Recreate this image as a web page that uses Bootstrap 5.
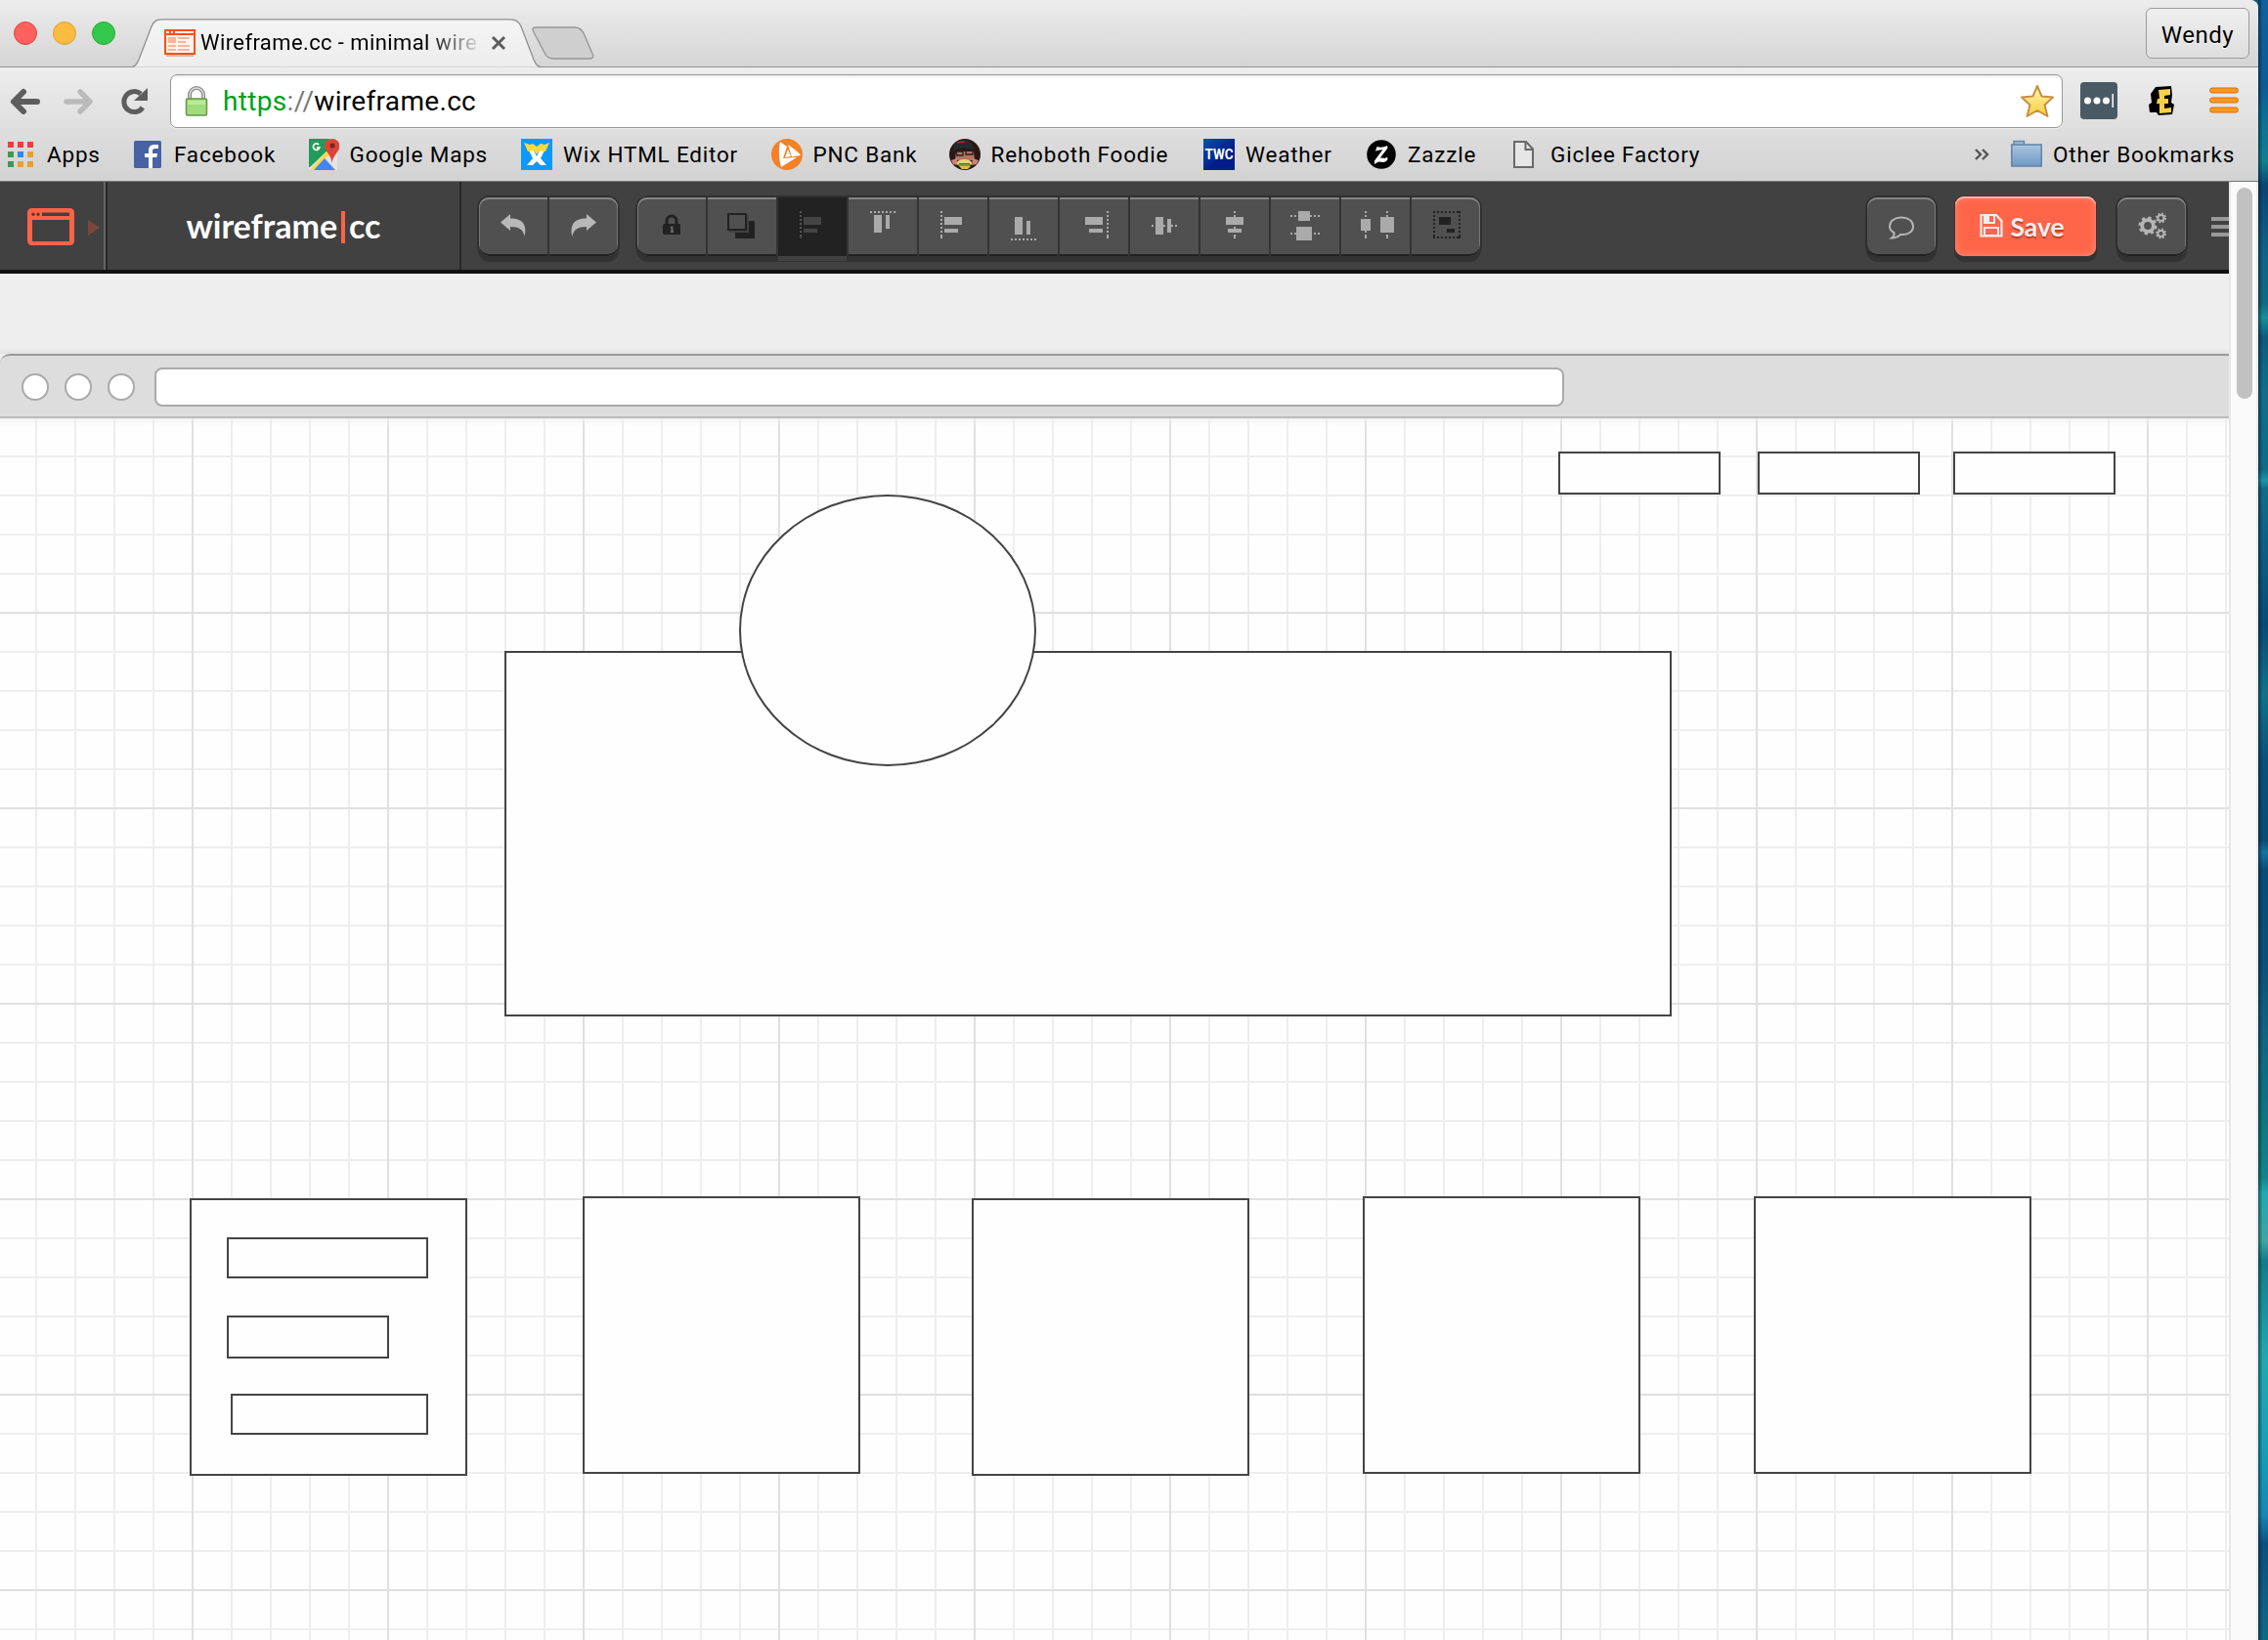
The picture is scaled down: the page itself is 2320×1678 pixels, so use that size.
<!DOCTYPE html>
<html lang="en">
<head>
<meta charset="utf-8">
<meta name="viewport" content="width=device-width, initial-scale=1">
<title>Wireframe.cc - minimal wireframing tool</title>
<link href="https://cdn.jsdelivr.net/npm/bootstrap@5.3.0/dist/css/bootstrap.min.css" rel="stylesheet">
<style>
  html, body { height: 100%; overflow: hidden; }
  body { font-family: Roboto, "Liberation Sans", sans-serif; color: #000; background: #0e5a70; line-height: 1; }
  svg { display: block; flex: none; }
  .desk { width: 2320px; height: 1678px; }
  .win { width: 2310px; background: #d9d9d9; border-top-right-radius: 8px; }
  .wallpaper { width: 10px; background: linear-gradient(90deg, rgba(0,20,30,.55), rgba(0,20,30,0) 45%),
    linear-gradient(#0f609c 0, #0c5c94 90px, #0d6f94 120px, #12808f 165px, #0a4470 190px, #0c4f7c 215px, #0f6485 260px, #0f6a80 310px, #169099 325px, #0d5a7c 345px, #0f6f8b 400px, #106a85 480px, #1a97a6 492px, #0f6d88 500px, #0c5a7f 580px, #0a4a73 640px, #117289 710px, #0a5077 780px, #0a4b74 860px, #1673a0 872px, #0a4c78 890px, #0b4e76 980px, #0f6580 1060px, #10777f 1150px, #12858a 1205px, #23a8ae 1220px, #3fa5a5 1270px, #127c88 1290px, #1b929b 1340px, #22a9ae 1390px, #16a0b6 1480px, #1787b5 1550px, #0c4f80 1580px, #0f6a83 1678px); }
  .strip { height: 69px; background: linear-gradient(#ececec, #d5d5d5); border-bottom: 1px solid #929292; }
  .lights { padding: 22px 0 0 14px; }
  .light { width: 24px; height: 24px; border-radius: 50%; margin-right: 16px; border: 1px solid; }
  .light-r { background: #fc615d; border-color: #e04744; }
  .light-y { background: #fdbc40; border-color: #e0a033; }
  .light-g { background: #34c84a; border-color: #27aa35; }
  .tab { width: 418px; height: 50px; margin: 19px 0 0 12px; }
  .tab-in { padding: 11px 0 0 38px; }
  .tab-title { width: 302px; font-size: 22px; letter-spacing: .4px; line-height: 27px; margin: 0 0 0 5px; white-space: nowrap;
    -webkit-mask-image: linear-gradient(90deg, #000 232px, transparent 290px); mask-image: linear-gradient(90deg, #000 232px, transparent 290px); }
  .tab-x { margin: 6px 0 0 -5px; }
  .newtab { margin: 27px 0 0 -4px; }
  .user { width: 106px; height: 52px; margin: 8px 9px 0 auto; padding-top: 3px; border: 1px solid #9b9b9b; border-radius: 6px; background: linear-gradient(#efefef, #dedede); font-size: 24px; letter-spacing: .5px; text-shadow: 0 1px #fff; }
  .chrome { height: 117px; background: linear-gradient(#ededed, #d2d2d2); border-bottom: 1px solid #727674; }
  .omni { width: 1936px; height: 55px; margin-top: 7px; border: 1.5px solid #979797; border-radius: 7px; background: #fff; box-shadow: inset 0 2px 1px #eee, 0 1px #efefef; }
  .url { font-size: 28px; margin-left: 15px; padding-top: 1px; letter-spacing: .32px; }
  .marks { height: 54px; font-size: 22.500px; letter-spacing: .8px; padding-left: 5px; }
  .mk { gap: 11px; white-space: nowrap; flex: none; padding-top: 1px; }
  .mk svg { width: 32px; height: 32px; margin-top: -1px; }
  .appbar { height: 94px; background: #414141; border-bottom: 4px solid #111; }
  .brandcell { width: 364px; height: 90px; border-left: 2px solid #272727; border-right: 2px solid #272727; font: 700 34px/1 Lato, sans-serif; color: #fff; }
  .menucell { width: 108px; height: 90px; border-right: 2px solid #656565; padding-left: 28px; }
  .pipe { width: 4px; height: 33px; background: #ff6347; margin: 2px 4px 0; }
  .tools { height: 60px; margin-top: 16px; border-radius: 11px; box-shadow: 0 0 0 2px #303030, 0 5px 0 1px #333; background: #333; gap: 2px; }
  .tool { width: 70px; height: 60px; padding: 0; border: 0; border-radius: 0; background: #505050; box-shadow: inset 0 2px #858585, inset 0 -2px #222; color: #aaa; }
  .tool.edge-l { border-radius: 10px 0 0 10px; box-shadow: inset 0 2px #858585, inset 0 -2px #222, inset 1px 0 #777; }
  .tool.edge-r { border-radius: 0 10px 10px 0; box-shadow: inset 0 2px #858585, inset 0 -2px #222, inset -1px 0 #777; }
  .tool.edge-l.edge-r { border-radius: 10px; }
  .tool.on { background: #222; box-shadow: 0 5px #414141; color: #444; }
  .dark { color: #222; }
  .save { width: 144px; height: 61px; margin-top: 15px; border-radius: 9px; background: #ff6549; box-shadow: inset 0 2px #ffb3a3, inset 0 0 8px #ff8d78, 0 0 0 1px #383838, 0 5px 0 1px #333; color: #eee; font: 700 26.500px/1 Lato, sans-serif; border: 0; gap: 7px; padding: 2px 7px 0 0; text-shadow: 0 2px 1px #b8412c; }
  .gutter { height: 82px; background: linear-gradient(#eee 76px, #e2e2e2); }
  .mockbar { height: 66px; background: #ddd; border-top: 2px solid #999; border-bottom: 2px solid #bbb; border-top-left-radius: 10px; padding: 2px 0 0 22px; }
  .dot { width: 28px; height: 28px; border-radius: 50%; background: #fff; border: 2px solid #aaa; margin-right: 16px; }
  .mockurl { width: 1442px; height: 40px; border: 2px solid #aaa; border-radius: 8px; background: #fff; margin-left: 4px; }
  .page { width: 2280px; background: #eee; }
  .sheet { background-color: #fefefe; box-shadow: inset 0 10px 8px -8px #eee;
    background-image: linear-gradient(90deg, #e0e0e0 2px, transparent 2px), linear-gradient(#e0e0e0 2px, transparent 2px), linear-gradient(90deg, #eee 2px, transparent 2px), linear-gradient(#eee 2px, transparent 2px);
    background-size: 200px 200px, 200px 200px, 40px 40px, 40px 40px;
    background-position: 196px 198px, 196px 198px, 36px 38px, 36px 38px; }
  .shape { position: absolute; background: #fefefe; border: 2px solid #444; }
  .nav-1, .nav-2, .nav-3 { top: 34px; width: 166px; height: 44px; }
  .nav-1 { left: 1594px; } .nav-2 { left: 1798px; } .nav-3 { left: 1998px; }
  .hero { left: 516px; top: 238px; width: 1194px; height: 374px; }
  .orb { left: 756px; top: 78px; width: 304px; height: 278px; border-radius: 50%; }
  .sq { width: 284px; height: 284px; top: 796px; }
  .sq-1 { left: 194px; top: 798px; } .sq-2 { left: 596px; } .sq-3 { left: 994px; top: 798px; } .sq-4 { left: 1394px; } .sq-5 { left: 1794px; }
  .ln-1 { left: 232px; top: 838px; width: 206px; height: 42px; }
  .ln-2 { left: 232px; top: 918px; width: 166px; height: 44px; }
  .ln-3 { left: 236px; top: 998px; width: 202px; height: 42px; }
  .track { width: 30px; background: #fafafa; border-left: 2px solid #e7e7e7; border-right: 2px solid #ececec; padding: 6px 0 0 6px; }
  .thumb { width: 16px; height: 216px; border-radius: 8px; background: #c1c1c1; }
</style>
<script src="https://cdn.jsdelivr.net/npm/bootstrap@5.3.0/dist/js/bootstrap.bundle.min.js"></script>
</head>
<body>
<div class="desk d-flex overflow-hidden">
  <div class="win d-flex flex-column overflow-hidden">

    <!-- tab strip -->
    <div class="strip d-flex flex-shrink-0">
      <div class="lights d-flex">
        <span class="light light-r"></span>
        <span class="light light-y"></span>
        <span class="light light-g me-0"></span>
      </div>
      <div class="tab position-relative flex-shrink-0">
        <svg class="position-absolute top-0 start-0" width="434" height="50" viewBox="0 0 434 50">
          <defs><linearGradient id="tg" x1="0" y1="0" x2="0" y2="1"><stop offset="0" stop-color="#f4f4f4"/><stop offset="1" stop-color="#ededed"/></linearGradient></defs>
          <path d="M0 50.500C8 50 10 47 12 42L25 8C28 2 30 .8 37 .8H390C397 .8 400 2 403 8L416 42C418 47 420 49.500 426 50.500Z" fill="url(#tg)" stroke="#8f8f8f" stroke-width="1.300"/>
        </svg>
        <div class="tab-in d-flex position-relative">
          <svg width="32" height="28" viewBox="0 0 32 28">
            <path d="M2 26h28v2H2z" fill="#d9b8ac"/><path d="M0 0h32v26H0z" fill="#ff4f12"/><path d="M2 6h28v18H2z" fill="#fff4ee"/>
            <path d="M2 2h3v2H2zM7 2h2v2H7zM11 2h19v2H11z" fill="#fff"/>
            <path d="M4 8h8v6H4zM14 8h12v2H14zM14 12h8v2h-8zM4 16h8v2H4zM14 16h12v2H14zM4 20h8v2H4zM14 20h12v2H14z" fill="#ffb497"/>
          </svg>
          <span class="tab-title flex-shrink-0">Wireframe.cc - minimal wire</span>
          <svg class="tab-x" width="16" height="16" viewBox="0 0 16 16"><path d="M2 2l12 12M14 2L2 14" stroke="#5c5c5c" stroke-width="3"/></svg>
        </div>
      </div>
      <svg class="newtab" width="66" height="34" viewBox="0 0 66 34"><path d="M5 1H44C49 1 51 3 53 7L62 28C64 32 62 33 58 33H23C17 33 15 31 13 27L2 6C0 2 1 1 5 1Z" fill="#cfcfcf" stroke="#979797" stroke-width="1.400"/></svg>
      <div class="user d-flex align-items-center justify-content-center">Wendy</div>
    </div>

    <!-- location bar and bookmarks -->
    <div class="chrome flex-shrink-0">
      <div class="d-flex">
        <svg width="174" height="62" viewBox="0 0 174 62" fill="none">
          <path d="M38 35H15M24 25L14 35L24 45" stroke="#5d5d5d" stroke-width="6" stroke-linecap="round" stroke-linejoin="round"/>
          <path d="M68 35H91M82 25L92 35L82 45" stroke="#bababa" stroke-width="5.500" stroke-linecap="round" stroke-linejoin="round"/>
          <path d="M146 41A10.500 10.500 0 1 1 144 27" stroke="#5d5d5d" stroke-width="5"/><path d="M151 21V34H137Z" fill="#5d5d5d"/>
        </svg>
        <div class="omni d-flex align-items-center">
          <svg width="24" height="32" viewBox="0 0 24 32" style="margin-left:14px">
            <path d="M5 14V9a7 7 0 0 1 14 0v5" fill="none" stroke="#8b8b8b" stroke-width="4"/><path d="M5 14V9a7 7 0 0 1 14 0v5" fill="none" stroke="#ddd" stroke-width="1.500"/>
            <rect x="1.500" y="13" width="21" height="17" rx="1.500" fill="#a3da7c" stroke="#609b49" stroke-width="1.500"/><path d="M3 15h18v4H3z" fill="#bdea9c"/>
          </svg>
          <span class="url"><span style="color:#00a11a">https</span><span style="color:#777">://</span>wireframe.cc</span>
          <svg class="ms-auto" width="36" height="36" viewBox="0 0 36 36" style="margin-right:7px">
            <defs><linearGradient id="sg" x1="0" y1="0" x2="0" y2="1"><stop offset="0" stop-color="#fff6b8"/><stop offset="1" stop-color="#f8cf3a"/></linearGradient></defs>
            <path d="M18 2L22.500 12.500L34 13.500L25.500 21.500L28.500 33L18 27L7.500 33L10.500 21.500L2 13.500L13.500 12.500Z" fill="url(#sg)" stroke="#c98f42" stroke-width="2" stroke-linejoin="round"/>
          </svg>
        </div>
        <div class="d-flex align-items-center" style="margin:6px 0 0 18px">
          <svg width="38" height="38" viewBox="0 0 38 38"><rect width="38" height="38" rx="4" fill="#4a5a65"/><g fill="#fff"><circle cx="7.500" cy="19" r="3.500"/><circle cx="17" cy="19" r="3.500"/><circle cx="26.500" cy="19" r="3.500"/><path d="M32.500 12h1.500v14h-1.500z"/></g></svg>
          <svg width="28" height="32" viewBox="0 0 28 32" style="margin-left:31px"><path d="M8 2L24 1L25 10L24 18L27 20L25 30L11 31L9 28L2 28L1 20L4 18L3 9Z" fill="#000"/><path d="M11 5L23 4V10L17 11V14H21V19H17V24L24 23V28L12 29V19H9L10 14H12Z" fill="#f6d04b"/></svg>
          <svg width="32" height="30" viewBox="0 0 32 30" style="margin-left:35px"><g fill="#fa9a1c" stroke="#dd6c12" stroke-width="1"><rect x=".5" y="2" width="29" height="5" rx="2.500"/><rect x=".5" y="12" width="29" height="5" rx="2.500"/><rect x=".5" y="22" width="29" height="5" rx="2.500"/></g></svg>
        </div>
      </div>
      <div class="marks d-flex align-items-center">
        <div class="mk d-flex align-items-center" style="width:130px">
          <svg viewBox="0 0 32 32"><path d="M3 3h6v6H3zM13 3h6v6h-6zM23 3h6v6h-6z" fill="#f03b3f"/><path d="M3 13h6v6H3zM3 23h6v6H3z" fill="#3c9a57"/><path d="M13 13h6v6h-6z" fill="#2490ec"/><path d="M23 13h6v6h-6zM13 23h6v6h-6zM23 23h6v6h-6z" fill="#eb9f2c"/></svg>Apps</div>
        <div class="mk d-flex align-items-center" style="width:179.500px">
          <svg viewBox="0 0 32 32"><rect x="2" y="2" width="28" height="28" rx="1.500" fill="#4862a3"/><path d="M17 30V19h-4v-4h4v-3c0-4 2-6 6-6h4v4h-3c-2 0-3 .7-3 2.500V15h5l-.6 4H21v11z" fill="#fff"/></svg>Facebook</div>
        <div class="mk d-flex align-items-center" style="width:218.500px">
          <svg viewBox="0 0 32 32"><path d="M1 0H30V32H1Z" fill="#e4e4e4"/><path d="M1 0H22L20 12L2 29H1Z" fill="#219b5b"/><path d="M2 32L19 13L22 16L6 32Z" fill="#ffda45"/><path d="M6 32L17 20L28 32Z" fill="#4285f4"/><path d="M25 0C20 0 17 3 17 7.500C17 13 24 16 24.500 25C26 16 32.500 13 32.500 7.500C32.500 3 29 0 25 0Z" fill="#db4437"/><circle cx="25" cy="7" r="2.500" fill="#7b231e"/><path d="M11 6A3.200 3.200 0 1 0 11.700 9H9" fill="none" stroke="#fff" stroke-width="1.800"/></svg>Google Maps</div>
        <div class="mk d-flex align-items-center" style="width:255.500px">
          <svg viewBox="0 0 32 32"><rect width="32" height="32" fill="#0d99fb"/><path d="M8 12H13L16 18L19 12H24L20 20L26 27H20L16 23L12 27H6L12 20Z" fill="#fff"/><path d="M3 4L9 6L12 5L16 8L20 5L24 6L29 4L25 13L19 12L16 16L13 12L7 13Z" fill="#fbd938"/></svg>Wix HTML Editor</div>
        <div class="mk d-flex align-items-center" style="width:182px">
          <svg viewBox="0 0 32 32"><circle cx="16" cy="16" r="16" fill="#f58025"/><path d="M9 3L16 8L12 20L26 19L10 29C8 22 7 10 9 3Z" fill="#fff"/><path d="M17 6C23 10 28 14 30 17L21 18.500Z" fill="#fff"/><path d="M17 11L20 18L14 19Z" fill="#fff"/></svg>PNC Bank</div>
        <div class="mk d-flex align-items-center" style="width:260.500px">
          <svg viewBox="0 0 32 32"><circle cx="16" cy="16" r="16" fill="#2c1714"/><path d="M7 13H25L26 22H6Z" fill="#b57462"/><path d="M4 12C4 4 9 1 15 1C21 1 25 5 25 11L14 9Z" fill="#252a2d"/><path d="M8 4L16 3" stroke="#b72631" stroke-width="1.500"/><path d="M7 13H14V17H8ZM17 12H24V16H17Z" fill="none" stroke="#222" stroke-width="1.300"/><path d="M2 22L8 20L9 27L4 26ZM30 22L24 20L23 27L28 26Z" fill="#c98571"/><path d="M8 24C10 20 21 20 23 24V26H8Z" fill="#ead07e"/><path d="M8 26H23L21 28H10Z" fill="#69a931"/><path d="M10 25H21V26H10Z" fill="#be3424"/><path d="M10 28H22L19 31H13Z" fill="#e5b94e"/></svg>Rehoboth Foodie</div>
        <div class="mk d-flex align-items-center" style="width:166px">
          <svg viewBox="0 0 32 32"><defs><linearGradient id="wg" x1="0" y1="0" x2="1" y2="1"><stop offset="0" stop-color="#0753ad"/><stop offset=".6" stop-color="#001d89"/></linearGradient></defs><rect width="32" height="32" fill="url(#wg)"/><text x="1.500" y="21" font-size="15" font-weight="700" font-family="Roboto" fill="#fff" letter-spacing="0" textLength="29" lengthAdjust="spacingAndGlyphs">TWC</text></svg>Weather</div>
        <div class="mk d-flex align-items-center" style="width:146px">
          <svg viewBox="0 0 32 32"><circle cx="16" cy="16" r="14.800" fill="#000"/><path d="M10 13L11.500 8C15 9.500 19 8.500 22 7L22.500 9.500L14.500 20C17.500 18.500 19.500 21.500 22 18.500L22.500 21C20 25.500 17 23.500 13 23.500L9 26V22.500L17.500 11C15 12 12 11 10 13Z" fill="#fff"/></svg>Zazzle</div>
        <div class="mk d-flex align-items-center">
          <svg viewBox="0 0 32 32"><path d="M6 3H18L25 10.500V29H6Z" fill="#e6e6e6" stroke="#696969" stroke-width="2"/><path d="M17.500 3V11H25" fill="none" stroke="#696969" stroke-width="2"/></svg>Giclee Factory</div>
        <svg class="ms-auto" width="16" height="14" viewBox="0 0 16 14" style="margin-right:22px"><path d="M2 2L7 7L2 12M9 2L14 7L9 12" fill="none" stroke="#555" stroke-width="2.400"/></svg>
        <div class="mk d-flex align-items-center" style="width:253px">
          <svg viewBox="0 0 32 32"><defs><linearGradient id="fg" x1="0" y1="0" x2="0" y2="1"><stop offset="0" stop-color="#aac5df"/><stop offset="1" stop-color="#7099c4"/></linearGradient></defs><path d="M3 7V2.500H13.500V7" fill="#9db9d3" stroke="#648baf" stroke-width="1.500"/><rect x=".8" y="6" width="30.500" height="22" fill="url(#fg)" stroke="#5f83a5" stroke-width="1.500"/></svg>Other Bookmarks</div>
      </div>
    </div>

    <div class="d-flex flex-grow-1">
      <div class="page d-flex flex-column overflow-hidden">

        <!-- editor toolbar -->
        <div class="appbar d-flex flex-shrink-0 overflow-hidden">
          <div class="menucell d-flex align-items-center flex-shrink-0">
            <svg width="76" height="40" viewBox="0 0 76 40" style="margin-top:4px">
              <path fill-rule="evenodd" d="M5 0H43Q48 0 48 5V33Q48 38 43 38H5Q0 38 0 33V5Q0 0 5 0ZM15 4.500V8H43V4.500ZM5 12V34H43V12Z" fill="#ff6347"/><circle cx="6" cy="6.300" r="1.700" fill="#5b3a35"/><circle cx="11" cy="6.300" r="1.700" fill="#5b3a35"/>
              <path d="M62 12L74 20L62 28Z" fill="#7c463d"/></svg>
          </div>
          <div class="brandcell d-flex align-items-center justify-content-center flex-shrink-0"><span>wireframe</span><span class="pipe"></span><span>cc</span></div>
          <div class="tools d-flex flex-shrink-0" style="margin-left:18px">
            <button class="btn tool edge-l"><svg width="70" height="60"><path d="M22 25.500L32 17V21.500C43 21 50 27 46.500 40C45.500 33 41 30 32 30V34Z" fill="#b8b8b8"/></svg></button>
            <button class="btn tool edge-r"><svg width="70" height="60"><path d="M48 25.500L38 17V21.500C27 21 20 27 23.500 40C24.500 33 29 30 38 30V34Z" fill="#b8b8b8"/></svg></button>
          </div>
          <div class="tools d-flex flex-shrink-0" style="margin-left:20px">
            <button class="btn tool edge-l dark"><svg width="70" height="60"><path d="M30 29V24a5 5 0 0 1 10 0V29" fill="none" stroke="#222" stroke-width="3"/><rect x="26" y="27" width="18" height="11" rx="1.500" fill="#222"/><path d="M33.500 29.500h3v3l1 3.500h-4l1-3.500z" fill="#666"/></svg></button>
            <button class="btn tool dark"><svg width="70" height="60"><path d="M28 24H48V42H28Z" fill="#222"/><path d="M22 18H42V36H22Z" fill="#414141"/><path d="M21 17H39V33H21Z" fill="#505050" stroke="#222" stroke-width="2"/></svg></button>
            <button class="btn tool on"><svg width="70" height="60" fill="currentColor"><path d="M23 14V42" stroke="#555" stroke-width="2" stroke-dasharray="2"/><path d="M22 40h2v2h-2zM26 20h18v8H26zM26 32h14v4H26z"/></svg></button>
            <button class="btn tool"><svg width="70" height="60" fill="currentColor"><path d="M22 15H48" stroke="currentColor" stroke-width="2" stroke-dasharray="2"/><path d="M26 18h8v18h-8zM38 18h4v14h-4z"/></svg></button>
            <button class="btn tool"><svg width="70" height="60" fill="currentColor"><path d="M23 14V42" stroke="currentColor" stroke-width="2" stroke-dasharray="2"/><path d="M22 40h2v2h-2zM26 20h18v8H26zM26 32h14v4H26z"/></svg></button>
            <button class="btn tool"><svg width="70" height="60" fill="currentColor"><path d="M22 43H48" stroke="currentColor" stroke-width="2" stroke-dasharray="2"/><path d="M26 20h8v18h-8zM38 24h4v14h-4z"/></svg></button>
            <button class="btn tool"><svg width="70" height="60" fill="currentColor"><path d="M49 14V42" stroke="currentColor" stroke-width="2" stroke-dasharray="2"/><path d="M48 40h2v2h-2zM26 20h18v8H26zM30 32h14v4H30z"/></svg></button>
            <button class="btn tool"><svg width="70" height="60" fill="currentColor"><path d="M22 28h2v2h-2zM34 28h2v2h-2zM42 28h2v2h-2zM46 28h2v2h-2zM26 20h8v18h-8zM38 22h4v14h-4z"/></svg></button>
            <button class="btn tool"><svg width="70" height="60" fill="currentColor"><path d="M34 14h2v2h-2zM34 18h2v2h-2zM34 30h2v2h-2zM34 38h2v4h-2zM26 20h18v8H26zM28 32h14v4H28z"/></svg></button>
            <button class="btn tool"><svg width="70" height="60" fill="currentColor"><path d="M28 14h12v10H28zM20 18h2v2h-2zM24 18h2v2h-2zM40 18h2v2h-2zM44 18h2v2h-2zM48 18h2v2h-2zM26 30h16v14H26zM20 36h2v2h-2zM24 36h2v2h-2zM44 36h2v2h-2zM48 36h2v2h-2z"/></svg></button>
            <button class="btn tool"><svg width="70" height="60" fill="currentColor"><path d="M20 22h10v12H20zM24 14h2v2h-2zM24 18h2v2h-2zM24 34h2v2h-2zM24 38h2v4h-2zM40 20h14v16H40zM46 14h2v2h-2zM46 18h2v2h-2zM46 38h2v4h-2z"/></svg></button>
            <button class="btn tool edge-r dark"><svg width="70" height="60" fill="#222"><path d="M22 15H50M22 41H50M23 14V42M49 14V42" stroke="#222" stroke-width="2" stroke-dasharray="2"/><path d="M48 14h2v2h-2zM22 40h2v2h-2zM48 40h2v2h-2zM28 20h12v8H28zM36 32h8v4h-8z"/></svg></button>
          </div>
          <div class="tools flex-shrink-0" style="margin-left:396px"><button class="btn tool edge-l edge-r"><svg width="70" height="60"><path d="M35 20.500C42 20.500 47 24 47 29.500C47 35 42 38.500 34 38C31 41 28 41.500 25 41.500C27 40 28 38 27.500 36C24.500 34.500 23 32 23 29.500C23 24 28 20.500 35 20.500Z" fill="none" stroke="#b5b5b5" stroke-width="2"/></svg></button></div>
          <button class="btn save d-flex align-items-center justify-content-center flex-shrink-0" style="margin-left:20px">
            <svg width="24" height="26" viewBox="0 0 24 26" style="margin-top:-4px"><path d="M1.500 2H17L22.500 8V23.500H1.500Z" fill="none" stroke="#eee" stroke-width="2.200"/><path d="M5 2H15V10H5ZM5 15H19V23H5Z" fill="none" stroke="#eee" stroke-width="2"/><path d="M5 2H10V10H5Z" fill="#eee"/></svg>
            <span>Save</span>
          </button>
          <div class="tools flex-shrink-0" style="margin-left:22px"><button class="btn tool edge-l edge-r"><svg width="70" height="60" fill="none" stroke="#b5b5b5">
            <circle cx="31" cy="29" r="5.800" stroke-width="3.800"/><circle cx="31" cy="29" r="8.200" stroke-width="2.600" stroke-dasharray="3.220"/>
            <circle cx="44.500" cy="21" r="3.100" stroke-width="2"/><circle cx="44.500" cy="21" r="4.600" stroke-width="1.800" stroke-dasharray="1.810"/>
            <circle cx="44.500" cy="37" r="3.100" stroke-width="2"/><circle cx="44.500" cy="37" r="4.600" stroke-width="1.800" stroke-dasharray="1.810"/></svg></button></div>
          <svg width="30" height="22" viewBox="0 0 30 22" style="margin:36px 0 0 26px"><path d="M0 2H30M0 10H30M0 18H30" stroke="#999" stroke-width="4"/></svg>
        </div>

        <div class="gutter flex-shrink-0"></div>
        <div class="mockbar d-flex align-items-center flex-shrink-0">
          <span class="dot"></span><span class="dot"></span><span class="dot"></span><span class="mockurl"></span>
        </div>

        <!-- drawing canvas -->
        <div class="sheet position-relative flex-grow-1 overflow-hidden">
          <div class="shape nav-1"></div><div class="shape nav-2"></div><div class="shape nav-3"></div>
          <div class="shape hero"></div><div class="shape orb"></div>
          <div class="shape sq sq-1"></div><div class="shape sq sq-2"></div><div class="shape sq sq-3"></div><div class="shape sq sq-4"></div><div class="shape sq sq-5"></div>
          <div class="shape ln-1"></div><div class="shape ln-2"></div><div class="shape ln-3"></div>
        </div>
      </div>
      <div class="track flex-shrink-0"><div class="thumb"></div></div>
    </div>
  </div>
  <div class="wallpaper flex-shrink-0"></div>
</div>
</body>
</html>
